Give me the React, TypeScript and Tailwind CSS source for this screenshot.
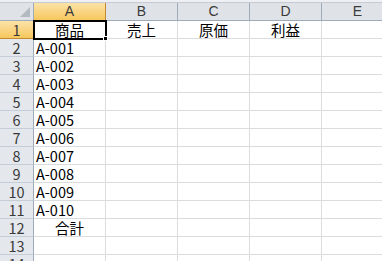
import React from 'react';

const cols = ['A', 'B', 'C', 'D', 'E'];
const head = ['商品', '売上', '原価', '利益', ''];

function rowCells(r: number): string[] {
  if (r === 1) return head;
  if (r >= 2 && r <= 11) return [`A-${String(r - 1).padStart(3, '0')}`, '', '', '', ''];
  if (r === 12) return ['合計', '', '', '', ''];
  return ['', '', '', '', ''];
}

const jp = "font-['MS_PGothic','Noto_Sans_CJK_JP',sans-serif]";

export default function App() {
  const rows = Array.from({ length: 14 }, (_, i) => i + 1);

  return (
    <div className={`h-[261px] w-[382px] overflow-hidden bg-white text-[14.5px] leading-[15px] text-black ${jp}`}>
      {/* thin strip above the headers */}
      <div className="h-[3px] border-b border-[#c6cbd3] bg-[#eef0f3]" />

      <div className="grid grid-cols-[34px_72px_72px_72px_72px_72px]">
        {/* corner */}
        <div className="relative h-[18px] border-b border-r border-[#9eabbb] bg-[#dfe3e8]">
          <svg className="absolute bottom-[3px] right-[3px]" width="10" height="10" viewBox="0 0 10 10">
            <polygon points="10,0 10,10 0,10" fill="#b4bac2" />
          </svg>
        </div>
        {cols.map((c) => (
          <div
            key={c}
            className={`flex h-[18px] items-center justify-center border-b border-r font-['Liberation_Sans',sans-serif] text-[14px] text-[#3a3a3a] ${
              c === 'A'
                ? 'border-b-[#c28a30] border-r-[#c28a30] bg-gradient-to-b from-[#fbe3a6] to-[#f7c75c]'
                : 'border-[#9eabbb] bg-[#dfe3e8]'
            }`}
          >
            {c}
          </div>
        ))}

        {rows.map((r) => {
          const cells = rowCells(r);
          return (
            <React.Fragment key={r}>
              <div
                className={`flex h-[18px] items-center justify-center border-b border-r text-[#3a3a3a] ${
                  r === 1
                    ? 'border-b-[#c28a30] border-r-[#c28a30] bg-gradient-to-b from-[#fbe3a6] to-[#f7c75c]'
                    : 'border-b-[#c5cdd6] border-r-[#9eabbb] bg-[#e4e8ed]'
                }`}
              >
                {r}
              </div>
              {cells.map((v, ci) => {
                const centered = r === 1 || r === 12;
                const sel = r === 1 && ci === 0;
                return (
                  <div
                    key={ci}
                    className={`relative flex h-[18px] items-center border-b border-r border-[#dadcdd] px-[2px] ${
                      centered ? 'justify-center' : 'justify-start'
                    }`}
                  >
                    {v}
                    {sel && (
                      <>
                        <div className="pointer-events-none absolute -left-[1px] -top-[1px] h-[20px] w-[74px] border-2 border-black" />
                        <div className="absolute -bottom-[3px] -right-[3px] z-10 h-[5px] w-[5px] border border-white bg-black" />
                      </>
                    )}
                  </div>
                );
              })}
            </React.Fragment>
          );
        })}
      </div>
    </div>
  );
}
